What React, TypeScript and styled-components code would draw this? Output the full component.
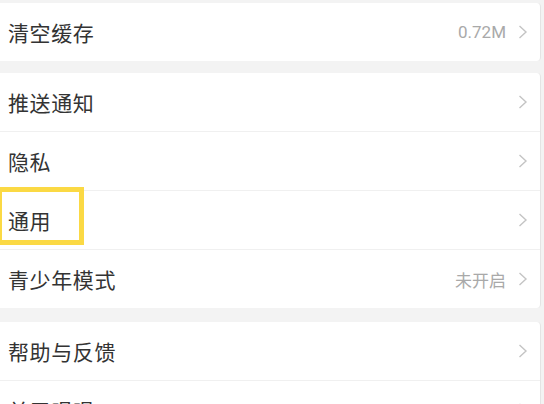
import React from "react";
import styled, { createGlobalStyle } from "styled-components";

const Global = createGlobalStyle`
  html, body { margin: 0; padding: 0; background: #f3f3f3; }
  body { font-family: "Noto Sans CJK SC", "Noto Sans", sans-serif; overflow: hidden; }
`;

const Page = styled.div`
  width: 544px;
  height: 404px;
  background: #f3f3f3;
  padding-top: 3px;
  box-sizing: border-box;
  overflow: hidden;
`;

const Card = styled.div<{ $gap: number }>`
  width: 541px;
  background: #fff;
  border-right: 1px solid #e4e4e4;
  border-radius: 0 4px 4px 0;
  box-sizing: border-box;
  margin-bottom: ${(p) => p.$gap}px;
`;

const Row = styled.div`
  height: 58px;
  display: flex;
  align-items: center;
  padding: 0 12px 0 8px;
  box-sizing: border-box;
  position: relative;
  & + & {
    border-top: 1px solid #f0f0f0;
    height: 59px;
  }
`;

const Label = styled.span`
  font-size: 21px;
  color: #333;
  flex: 1;
  letter-spacing: 0.6px;
`;

const Value = styled.span`
  font-size: 17px;
  color: #a9a9a9;
  margin-right: 12px;
  font-family: Roboto, "Noto Sans CJK SC", sans-serif;
`;

const Highlight = styled.div`
  position: absolute;
  left: -3px;
  top: -4px;
  width: 87px;
  height: 58px;
  border: 5px solid #fbd944;
  box-sizing: border-box;
  pointer-events: none;
`;

const Chevron = () => (
  <svg width="10" height="16" viewBox="0 0 10 16" style={{ flexShrink: 0 }}>
    <polyline points="1.5,2 8,8 1.5,14" fill="none" stroke="#c4c4c4" strokeWidth="1.4" />
  </svg>
);

type Item = { label: string; value?: string; hl?: boolean };

const groups: { items: Item[]; gap: number }[] = [
  { items: [{ label: "清空缓存", value: "0.72M" }], gap: 12 },
  {
    items: [
      { label: "推送通知" },
      { label: "隐私" },
      { label: "通用", hl: true },
      { label: "青少年模式", value: "未开启" },
    ],
    gap: 14,
  },
  { items: [{ label: "帮助与反馈" }, { label: "关于唱唱" }], gap: 0 },
];

export default function App() {
  return (
    <Page>
      <Global />
      {groups.map((g, gi) => (
        <Card key={gi} $gap={g.gap}>
          {g.items.map((it) => (
            <Row key={it.label}>
              {it.hl && <Highlight />}
              <Label>{it.label}</Label>
              {it.value && <Value>{it.value}</Value>}
              <Chevron />
            </Row>
          ))}
        </Card>
      ))}
    </Page>
  );
}
